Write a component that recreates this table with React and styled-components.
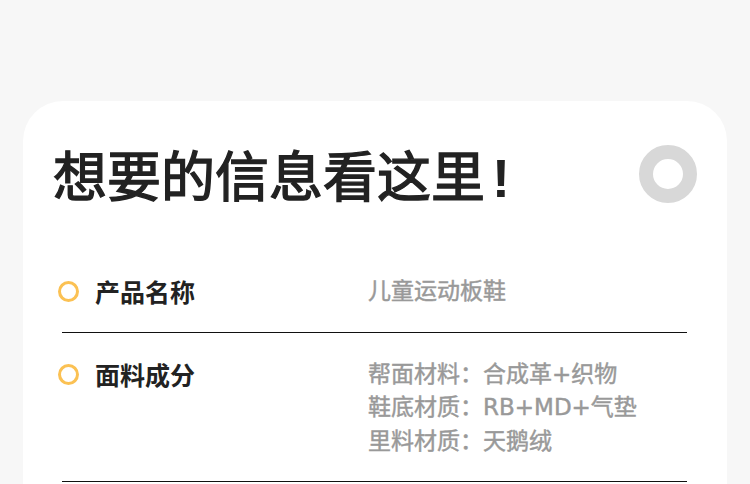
import React from "react";
import styled, { createGlobalStyle } from "styled-components";

const Global = createGlobalStyle`
  html, body { margin: 0; padding: 0; background: #f7f7f7; }
  body { font-family: "Noto Sans CJK SC", "Noto Sans", sans-serif; }
`;

const Page = styled.div`
  padding: 101px 23px 0;
  height: 484px;
  box-sizing: border-box;
  overflow: hidden;
`;

const Card = styled.section`
  background: #ffffff;
  border-radius: 40px 40px 0 0;
  padding: 41px 0 60px;
`;

const Header = styled.header`
  display: flex;
  align-items: center;
  justify-content: space-between;
  padding: 0 30px 0 30px;
  margin-bottom: 44px;
`;

const Title = styled.h1`
  margin: 0;
  height: 64px;
  font-size: 54px;
  line-height: 64px;
  font-weight: 400;
  color: #222222;
  -webkit-text-stroke: 1.4px #222222;
  font-family: "Noto Sans CJK SC", sans-serif;
`;

const Bang = styled.span`
  font-family: "Liberation Sans", sans-serif;
  font-weight: 700;
  line-height: 1;
  margin-left: 7px;
  -webkit-text-stroke: 0;
`;

const GreyRing = styled.span`
  width: 58px;
  height: 58px;
  box-sizing: border-box;
  border-radius: 50%;
  border: 14px solid #d8d8d8;
  flex: none;
`;

const List = styled.div`
  padding: 0 36px 0 35px;
`;

const Row = styled.div`
  display: grid;
  grid-template-columns: 21px 285px 1fr;
  align-items: start;
  padding: 25px 0 23px;
  border-bottom: 1px solid #111111;
  margin: 0 4px;
`;

const Dot = styled.span`
  width: 21px;
  height: 21px;
  box-sizing: border-box;
  border-radius: 50%;
  border: 3.5px solid #fbc153;
  margin: 6px 0 0 -4px;
`;

const Label = styled.div`
  padding-left: 12px;
  font-size: 25px;
  line-height: 33.5px;
  font-weight: 700;
  color: #222222;
`;

const Values = styled.div`
  display: flex;
  flex-direction: column;
  font-family: "DejaVu Sans", "Noto Sans CJK SC", sans-serif;
  font-size: 23px;
  line-height: 33.5px;
  font-weight: 400;
  color: #999999;
  -webkit-text-stroke: 0.45px #999999;
`;

const rows = [
  { label: "产品名称", values: ["儿童运动板鞋"] },
  {
    label: "面料成分",
    values: ["帮面材料：合成革+织物", "鞋底材质：RB+MD+气垫", "里料材质：天鹅绒"],
  },
];

export default function App() {
  return (
    <>
      <Global />
      <Page>
        <Card>
          <Header>
            <Title>
              想要的信息看这里<Bang>!</Bang>
            </Title>
            <GreyRing />
          </Header>
          <List>
            {rows.map((r) => (
              <Row key={r.label}>
                <Dot />
                <Label>{r.label}</Label>
                <Values>
                  {r.values.map((v) => (
                    <span key={v}>{v}</span>
                  ))}
                </Values>
              </Row>
            ))}
          </List>
        </Card>
      </Page>
    </>
  );
}
